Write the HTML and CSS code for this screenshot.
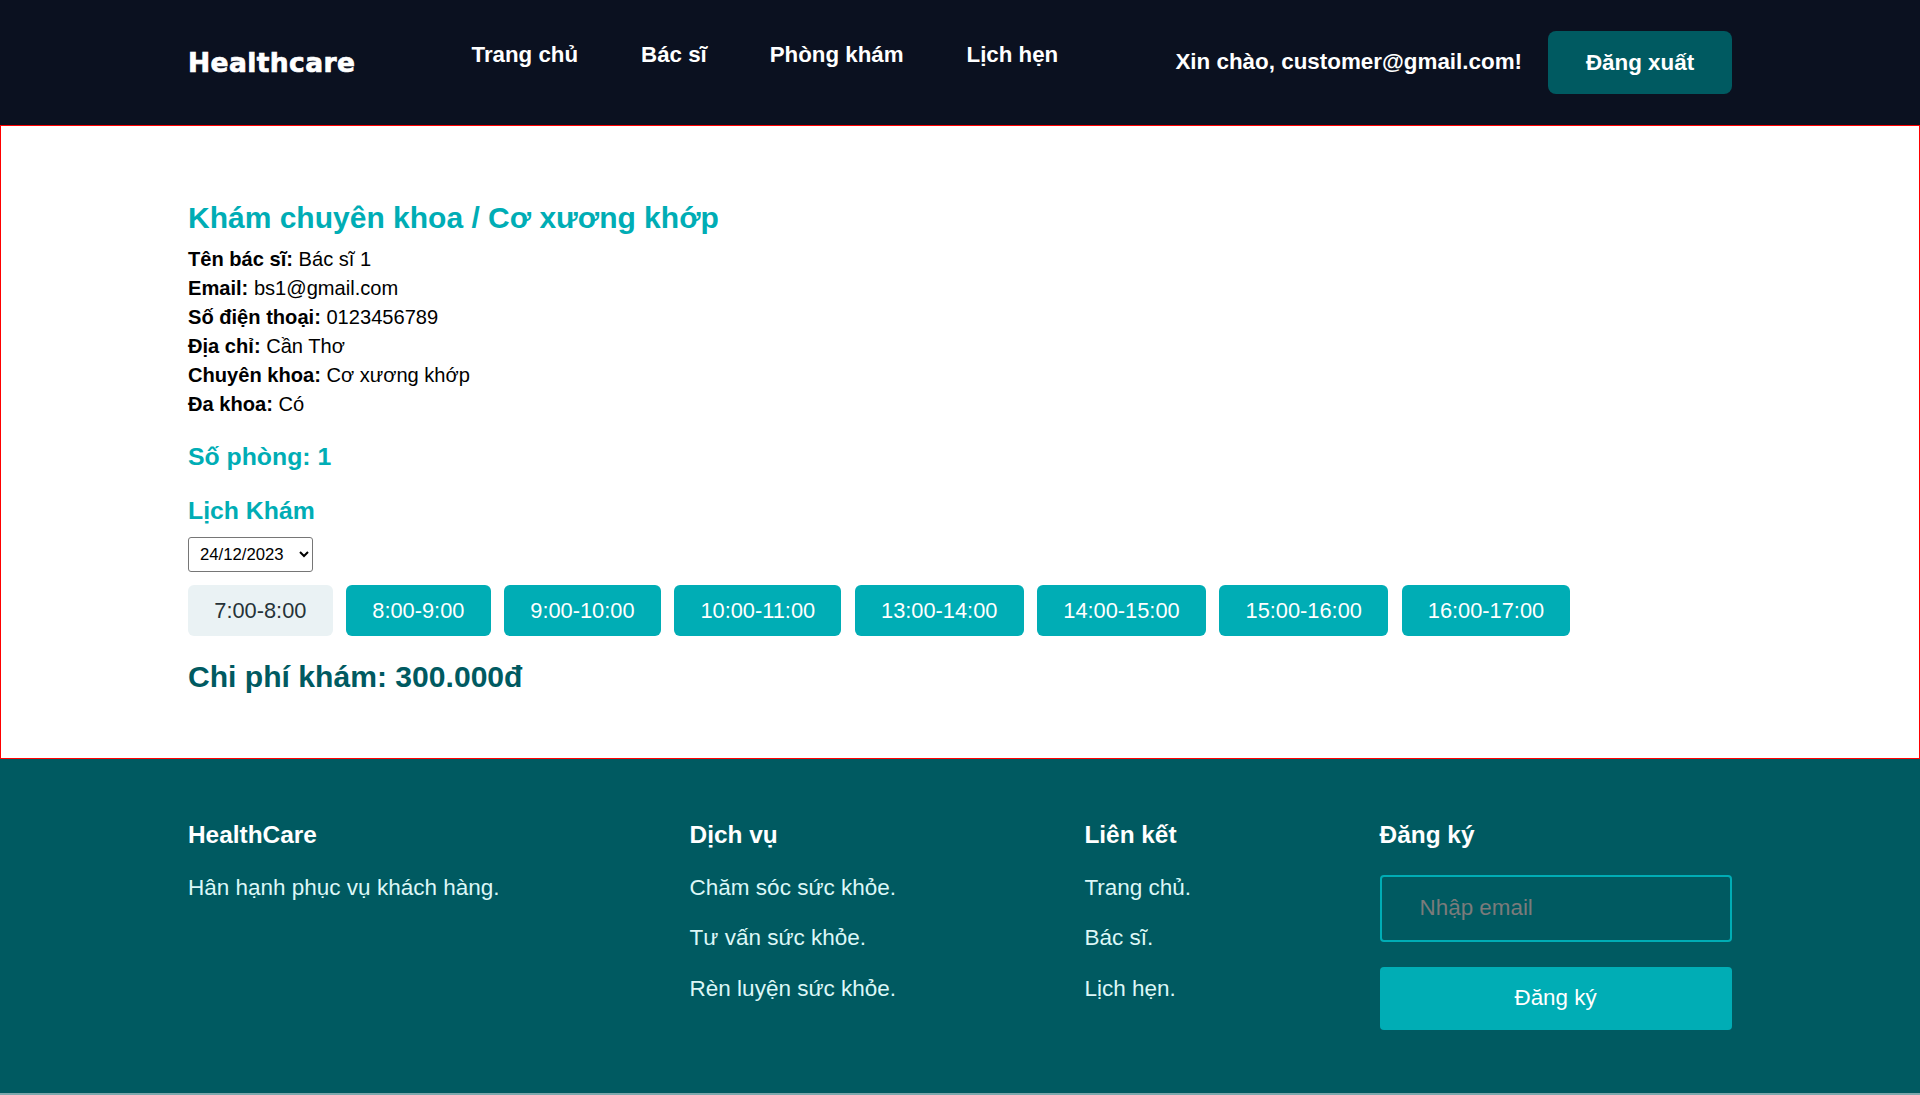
FILE: index.html
```html
<!DOCTYPE html>
<html lang="vi">
<head>
<meta charset="utf-8">
<title>Healthcare</title>
<link rel="stylesheet" href="styles.css">
</head>
<body>
<header class="site-header">
  <div class="container header-inner">
    <a class="logo" href="#">Healthcare</a>
    <nav class="main-nav">
      <a href="#">Trang chủ</a>
      <a href="#">Bác sĩ</a>
      <a href="#">Phòng khám</a>
      <a href="#">Lịch hẹn</a>
    </nav>
    <div class="user-area">
      <span class="greeting">Xin chào, customer@gmail.com!</span>
      <button class="logout-btn" type="button">Đăng xuất</button>
    </div>
  </div>
</header>

<main class="doctor-page">
  <div class="container">
    <h2 class="page-title">Khám chuyên khoa / Cơ xương khớp</h2>
    <div class="info">
      <p><b>Tên bác sĩ:</b> Bác sĩ 1</p>
      <p><b>Email:</b> bs1@gmail.com</p>
      <p><b>Số điện thoại:</b> 0123456789</p>
      <p><b>Địa chỉ:</b> Cần Thơ</p>
      <p><b>Chuyên khoa:</b> Cơ xương khớp</p>
      <p><b>Đa khoa:</b> Có</p>
    </div>
    <h3 class="room">Số phòng: 1</h3>
    <h3 class="schedule-title">Lịch Khám</h3>
    <select class="date-select">
      <option>24/12/2023</option>
    </select>
    <div class="slots">
      <button class="slot slot-off" type="button">7:00-8:00</button>
      <button class="slot" type="button">8:00-9:00</button>
      <button class="slot" type="button">9:00-10:00</button>
      <button class="slot" type="button">10:00-11:00</button>
      <button class="slot" type="button">13:00-14:00</button>
      <button class="slot" type="button">14:00-15:00</button>
      <button class="slot" type="button">15:00-16:00</button>
      <button class="slot" type="button">16:00-17:00</button>
    </div>
    <h2 class="price">Chi phí khám: 300.000đ</h2>
  </div>
</main>

<footer class="site-footer">
  <div class="container footer-grid">
    <div class="f-col">
      <h4>HealthCare</h4>
      <p>Hân hạnh phục vụ khách hàng.</p>
    </div>
    <div class="f-col">
      <h4>Dịch vụ</h4>
      <p>Chăm sóc sức khỏe.</p>
      <p>Tư vấn sức khỏe.</p>
      <p>Rèn luyện sức khỏe.</p>
    </div>
    <div class="f-col">
      <h4>Liên kết</h4>
      <p>Trang chủ.</p>
      <p>Bác sĩ.</p>
      <p>Lịch hẹn.</p>
    </div>
    <div class="f-col">
      <h4>Đăng ký</h4>
      <input class="email-input" type="text" placeholder="Nhập email">
      <button class="subscribe-btn" type="button">Đăng ký</button>
    </div>
  </div>
</footer>
</body>
</html>
```

FILE: styles.css
```css
* {
  box-sizing: border-box;
}

html, body {
  margin: 0;
  padding: 0;
}

body {
  font-family: "Liberation Sans", Arial, sans-serif;
  background: #ffffff;
  color: #000;
}

.container {
  width: 1544px;
  margin: 0 auto;
}

/* Header */
.site-header {
  background: #0b1120;
  height: 125px;
}

.header-inner {
  display: flex;
  align-items: center;
  height: 125px;
}

.logo {
  flex: none;
  width: 283.5px;
  font-family: "DejaVu Sans", "Liberation Sans", sans-serif;
  font-weight: bold;
  font-size: 26.5px;
  letter-spacing: 0.4px;
  -webkit-text-stroke: 0.7px #ffffff;
  color: #ffffff;
  text-decoration: none;
  line-height: 30px;
}

.main-nav {
  display: flex;
  gap: 63px;
  padding-bottom: 16px;
}

.main-nav a {
  color: #ffffff;
  font-weight: bold;
  font-size: 22.3px;
  line-height: 26px;
  text-decoration: none;
}

.user-area {
  margin-left: auto;
  display: flex;
  align-items: center;
  gap: 26px;
}

.greeting {
  color: #ffffff;
  font-weight: bold;
  font-size: 22.4px;
  line-height: 26px;
  padding-bottom: 2px;
}

.logout-btn {
  width: 184px;
  height: 63px;
  border: none;
  border-radius: 8px;
  background: #005a61;
  color: #ffffff;
  font-family: "Liberation Sans", Arial, sans-serif;
  font-weight: bold;
  font-size: 22.4px;
  cursor: pointer;
}

/* Main */
.doctor-page {
  border: 1px solid #ff0000;
  padding-top: 74px;
  padding-bottom: 63px;
}

.page-title {
  margin: 0;
  font-size: 30px;
  line-height: 36px;
  color: #00adb5;
  font-weight: bold;
}

.info {
  margin-top: 8.6px;
}

.info p {
  margin: 0;
  font-size: 20.1px;
  line-height: 29px;
  color: #000;
}

.room,
.schedule-title {
  margin: 0;
  font-size: 24.8px;
  line-height: 30px;
  color: #00adb5;
  font-weight: bold;
}

.room {
  margin-top: 23px;
}

.schedule-title {
  margin-top: 24.3px;
}

.date-select {
  display: block;
  margin-top: 11.5px;
  width: 125px;
  height: 35px;
  padding: 0 4px 0 7px;
  font-family: "Liberation Sans", Arial, sans-serif;
  font-size: 16.7px;
  color: #000;
  background: #ffffff;
  border: 1px solid #767676;
  border-radius: 3px;
}

.slots {
  display: flex;
  gap: 13.3px;
  margin-top: 12.7px;
}

.slot {
  height: 51px;
  padding: 0 26.3px;
  border: none;
  border-radius: 6px;
  background: #00adb5;
  color: #ffffff;
  font-family: "Liberation Sans", Arial, sans-serif;
  font-size: 21.8px;
  cursor: pointer;
}

.slot-off {
  background: #eaf2f4;
  color: #263238;
}

.price {
  margin: 22.7px 0 0;
  font-size: 30.1px;
  line-height: 36px;
  color: #005a61;
  font-weight: bold;
}

/* Footer */
.site-footer {
  background: #005a61;
  padding-top: 61.8px;
  padding-bottom: 63px;
  border-bottom: 2px solid #7ea8ad;
}

.footer-grid {
  display: grid;
  grid-template-columns: 501.6px 394.8px 295.2px 352px;
}

.f-col h4 {
  margin: 0 0 26.1px;
  font-size: 24.4px;
  line-height: 28px;
  color: #ffffff;
  font-weight: bold;
}

.f-col p {
  margin: 0 0 25.8px;
  font-size: 22.5px;
  line-height: 25px;
  color: #dcf7f7;
}

.email-input {
  display: block;
  width: 352px;
  height: 67px;
  padding: 0 38px;
  background: transparent;
  border: 2px solid #00adb5;
  border-radius: 4px;
  font-family: "Liberation Sans", Arial, sans-serif;
  font-size: 22.4px;
  color: #ffffff;
  outline: none;
}

.email-input::placeholder {
  color: #7b7b7b;
}

.subscribe-btn {
  display: block;
  margin-top: 25px;
  width: 352px;
  height: 63px;
  border: none;
  border-radius: 4px;
  background: #00adb5;
  color: #ffffff;
  font-family: "Liberation Sans", Arial, sans-serif;
  font-size: 22.4px;
  cursor: pointer;
}
```
